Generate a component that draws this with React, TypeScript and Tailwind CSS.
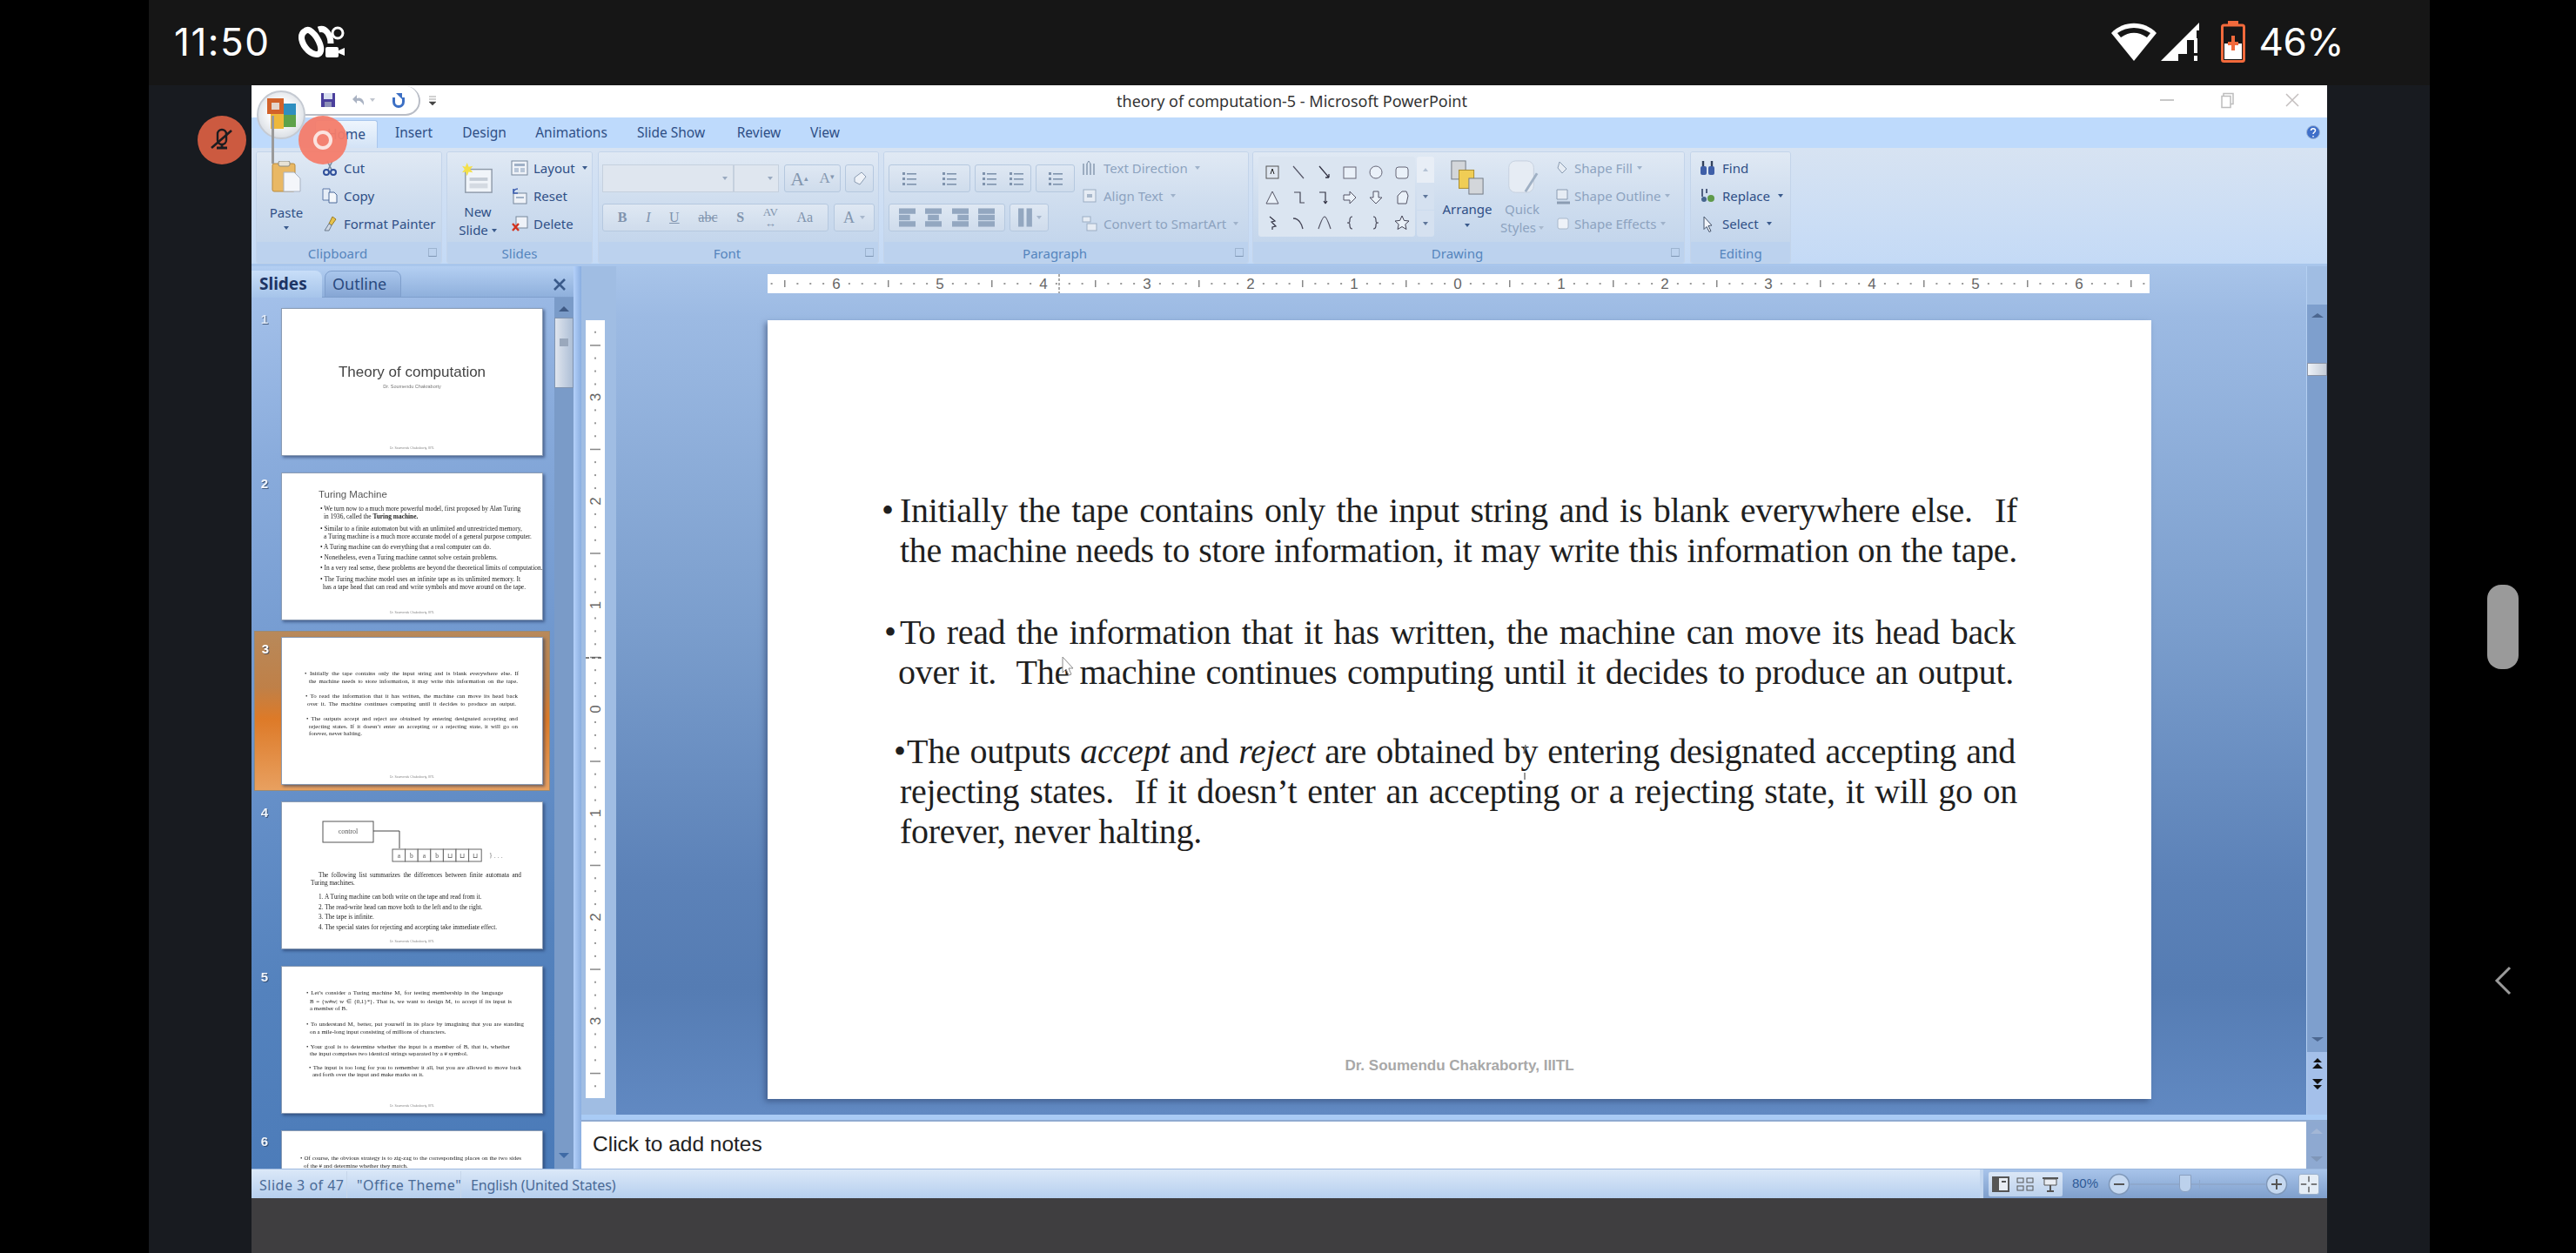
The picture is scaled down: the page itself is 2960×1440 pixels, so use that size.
import type { ReactNode } from 'react'

const serif = "font-['Liberation_Serif',serif]"

function Ic({ children, className = 'w-5 h-5' }: { children: ReactNode; className?: string }) {
  return (
    <svg viewBox="0 0 20 20" className={`${className} shrink-0`} fill="none">
      {children}
    </svg>
  )
}

function Arrow({ className = 'text-[#4a6a96]' }: { className?: string }) {
  return (
    <svg viewBox="0 0 6 4" className={`w-[6px] h-[4px] shrink-0 ${className}`}>
      <path d="M0 0h6L3 4z" fill="currentColor" />
    </svg>
  )
}

function Group({ label, className, launcher, children }: { label: string; className: string; launcher?: boolean; children: ReactNode }) {
  return (
    <div className={`${className} flex flex-col rounded-[3px] border border-[#c3d4ea] overflow-hidden`}>
      <div className="h-[104px] flex bg-gradient-to-b from-[#e0e9f4] via-[#d0deef] to-[#c4d6ec]">{children}</div>
      <div className={`h-[24px] pt-[2px] relative flex items-center justify-center bg-[#bcd2ee] text-[15px] text-[#5585bd] ${launcher ? 'pr-[26px]' : ''}`}>
        {label}
        {launcher && <span className="absolute right-[5px] top-[7px] w-[10px] h-[10px] border border-[#9db4d0] border-b-[#7f97b5]" />}
      </div>
    </div>
  )
}

function SmallBtn({ icon, label, disabled, arrow, w = 'gap-[6px]' }: { icon: ReactNode; label: string; disabled?: boolean; arrow?: boolean; w?: string }) {
  return (
    <div className={`h-[32px] flex items-center whitespace-nowrap text-[15px] ${w} ${disabled ? 'text-[#8da3bf]' : 'text-[#2f4f86]'}`}>
      {icon}
      <span>{label}</span>
      {arrow && <Arrow className={disabled ? 'text-[#9fb2ca] ml-[2px]' : 'text-[#3a5a8c] ml-[2px]'} />}
    </div>
  )
}

function Box({ className, children }: { className: string; children?: ReactNode }) {
  return (
    <div className={`${className} flex items-center border border-[#b5c8df] rounded-[3px] bg-gradient-to-b from-[#dfe8f3] to-[#cfdcec] text-[#7f93ad]`}>
      {children}
    </div>
  )
}

function Bars({ rows = 3 }: { rows?: number }) {
  return (
    <svg viewBox="0 0 20 20" className="w-[20px] h-[20px]">
      {Array.from({ length: rows }).map((_, i) => (
        <g key={i}>
          <rect x="2" y={3 + i * 6} width="3" height="3" fill="#7f93ad" />
          <rect x="7" y={4 + i * 6} width="11" height="1.6" fill="#7f93ad" />
        </g>
      ))}
    </svg>
  )
}

function AlignIcon({ kind }: { kind: number }) {
  const xs = [
    [0, 18, 0, 12, 0, 18],
    [0, 18, 3, 12, 0, 18],
    [0, 18, 6, 12, 0, 18],
    [0, 18, 0, 18, 0, 18],
  ][kind]
  return (
    <svg viewBox="0 0 18 22" className="w-[19px] h-[26px]">
      {[0, 1, 2].map((i) => (
        <rect key={i} x={xs[i * 2]} y={1 + i * 7} width={xs[i * 2 + 1]} height="6" fill="#93a7c0" />
      ))}
    </svg>
  )
}

// the 18 little shapes of the drawing gallery
const shapes: ReactNode[] = [
  <g key="0"><rect x="3" y="3" width="14" height="14" fill="#dfe7f1" stroke="#555" /><path d="M8 12l2-6 2 6" stroke="#222" /></g>,
  <path key="1" d="M4 3l12 14" stroke="#556" strokeWidth="1.2" />,
  <path key="2" d="M4 3l11 13m0 0v-4m0 4h-4" stroke="#334" strokeWidth="1.3" />,
  <rect key="3" x="3" y="4" width="14" height="13" fill="#eaf1f9" stroke="#667" />,
  <circle key="4" cx="10" cy="10" r="7" fill="#eaf1f9" stroke="#667" />,
  <rect key="5" x="3" y="4" width="14" height="13" rx="3" fill="#eaf1f9" stroke="#667" />,
  <path key="6" d="M10 3l7 14H3z" fill="#eaf1f9" stroke="#556" />,
  <path key="7" d="M5 4h7v12h5" stroke="#445" strokeWidth="1.2" />,
  <path key="8" d="M4 4h7v13m0 0l-2-3m2 3l2-3" stroke="#334" strokeWidth="1.2" />,
  <path key="9" d="M3 7h7V3l7 7-7 7v-4H3z" fill="#eaf1f9" stroke="#556" />,
  <path key="10" d="M7 3h6v7h4l-7 7-7-7h4z" fill="#eaf1f9" stroke="#556" />,
  <path key="11" d="M5 17V8l5-5h5l2 5-2 9z" fill="#eaf1f9" stroke="#556" />,
  <path key="12" d="M7 3l6 5-4 1 5 5-4 1v3" stroke="#334" strokeWidth="1.2" />,
  <path key="13" d="M4 5c6 0 9 4 11 12" stroke="#445" strokeWidth="1.3" />,
  <path key="14" d="M3 17C6 8 8 3 10 3s5 8 7 14" stroke="#556" strokeWidth="1.2" />,
  <path key="15" d="M13 3c-3 0-3 2-3 4s0 3-3 3c3 0 3 1 3 3s0 4 3 4" stroke="#445" strokeWidth="1.2" />,
  <path key="16" d="M7 3c3 0 3 2 3 4s0 3 3 3c-3 0-3 1-3 3s0 4-3 4" stroke="#445" strokeWidth="1.2" />,
  <path key="17" d="M10 2l2.4 5.4 5.6.6-4.2 3.8 1.2 5.7-5-3-5 3 1.200-5.700L2 8l5.600-.6z" fill="#eaf1f9" stroke="#445" />,
]

function Ribbon() {
  return (
    <div className="h-[136px] pl-[5px] pt-[4px] flex bg-gradient-to-b from-[#d7e3f2] to-[#c4daf6] border-b-[3px] border-[#a9c6ec]">
      <Group label="Clipboard" launcher className="w-[214px]">
        <div className="w-[68px] flex flex-col items-center pt-[10px] text-[15px] text-[#2f4f86]">
          <svg viewBox="0 0 34 36" className="w-[34px] h-[36px]">
            <rect x="1" y="3" width="26" height="32" rx="2" fill="#e9b864" stroke="#b98a3c" />
            <rect x="8" y="0" width="13" height="6" rx="2" fill="#e7e2d5" stroke="#8a8a80" />
            <path d="M14 13h12l7 7v15H14z" fill="#f4f6fa" stroke="#a8b2c2" />
          </svg>
          <span className="mt-[13px] leading-[20px]">Paste</span>
          <Arrow className="text-[#3a5a8c] mt-[6px]" />
        </div>
        <div className="pl-[6px] pt-[2px] flex flex-col">
          <SmallBtn label="Cut" icon={<Ic><path d="M7 2l5 10M13 2L8 12" stroke="#7a8aa0" strokeWidth="1.6" /><circle cx="6" cy="15" r="3" stroke="#2f4f9a" strokeWidth="2" /><circle cx="14" cy="15" r="3" stroke="#2f4f9a" strokeWidth="2" /></Ic>} />
          <SmallBtn label="Copy" icon={<Ic><path d="M2 2h8v13H2z" fill="#e6edf7" stroke="#5c79a8" /><path d="M9 6h6l3 3v9H9z" fill="#f4f7fb" stroke="#4c6a9a" /></Ic>} />
          <SmallBtn label="Format Painter" icon={<Ic><path d="M13 2l4 3-5 7-3-2z" fill="#e7c24a" stroke="#9a7a20" /><path d="M9 10l3 2-3 6-5 0z" fill="#cfd8e4" stroke="#6a7a8c" /></Ic>} />
        </div>
      </Group>

      <Group label="Slides" className="w-[168px] ml-[5px]">
        <div className="w-[70px] flex flex-col items-center pt-[12px] text-[15px] text-[#2f4f86] leading-[21px]">
          <svg viewBox="0 0 38 38" className="w-[36px] h-[36px]">
            <rect x="4" y="8" width="32" height="28" fill="#f0f4f9" stroke="#8d99a8" strokeWidth="1.500" />
            <rect x="9" y="18" width="22" height="4" fill="#c4ccd6" />
            <rect x="9" y="25" width="22" height="6" fill="#d4dae2" />
            <path d="M6 0l2 5 5-1-3 4 3 4-5-1-2 5-2-5-4 1 3-4-3-4 4 1z" fill="#f4e04a" />
          </svg>
          <span className="mt-[10px]">New</span>
          <span className="flex items-center gap-[4px]">Slide <Arrow className="text-[#3a5a8c]" /></span>
        </div>
        <div className="pl-[3px] pt-[2px] flex flex-col">
          <SmallBtn label="Layout" arrow icon={<Ic><rect x="1" y="2" width="18" height="16" fill="#eef2f8" stroke="#77879c" /><rect x="4" y="5" width="12" height="3" fill="#9fb0c6" /><rect x="4" y="10" width="5" height="5" fill="#b8c6d8" /><rect x="11" y="10" width="5" height="5" fill="#b8c6d8" /></Ic>} />
          <SmallBtn label="Reset" icon={<Ic><rect x="3" y="7" width="15" height="12" fill="#eef2f8" stroke="#77879c" /><rect x="6" y="11" width="9" height="2" fill="#9fb0c6" /><path d="M3 7c0-3 2-5 5-5M3 2l0 5 5 0" stroke="#3e5fb0" strokeWidth="1.600" /></Ic>} />
          <SmallBtn label="Delete" icon={<Ic><rect x="6" y="2" width="13" height="13" fill="#eef2f8" stroke="#77879c" /><path d="M2 10l7 8M9 10l-7 8" stroke="#d2331f" strokeWidth="2.400" /></Ic>} />
        </div>
      </Group>

      <Group label="Font" launcher className="w-[323px] ml-[6px]">
        <div className="pl-[4px] pt-[14px] flex flex-col gap-[13px]">
          <div className="flex">
            <div className="w-[151px] h-[32px] flex items-center justify-end pr-[6px] bg-[#dfe6ef] border border-[#c5d0de]"><Arrow className="text-[#9aaac0]" /></div>
            <div className="w-[52px] h-[32px] flex items-center justify-end pr-[6px] bg-[#dfe6ef] border border-[#c5d0de]"><Arrow className="text-[#9aaac0]" /></div>
            <Box className="w-[65px] h-[32px] ml-[6px] justify-around font-['Liberation_Serif',serif] text-[#8497af]">
              <span className="text-[22px]">A<sup className="text-[9px]">▴</sup></span>
              <span className="text-[17px]">A<sup className="text-[9px]">▾</sup></span>
            </Box>
            <Box className="w-[33px] h-[32px] ml-[5px] justify-center">
              <Ic><path d="M4 9l8-6 5 5-7 9-6-3z" fill="#eef2f8" stroke="#8b9cb2" /></Ic>
            </Box>
          </div>
          <div className="flex">
            <Box className="w-[260px] h-[32px] justify-around px-[6px] text-[16px] font-['Liberation_Serif',serif] text-[#8093ad]">
              <b>B</b>
              <i>I</i>
              <u>U</u>
              <s>abc</s>
              <b>S</b>
              <span className="text-[13px] leading-[13px] text-center">AV<br />↔</span>
              <span>Aa</span>
            </Box>
            <Box className="w-[47px] h-[32px] ml-[6px] justify-center gap-[6px] font-['Liberation_Serif',serif] text-[18px] text-[#8497af]">
              A <Arrow className="text-[#a8b8cc]" />
            </Box>
          </div>
        </div>
      </Group>

      <Group label="Paragraph" launcher className="w-[420px] ml-[5px]">
        <div className="pl-[5px] pt-[14px] flex flex-col gap-[13px]">
          <div className="flex gap-[5px]">
            <Box className="w-[94px] h-[32px] justify-around">
              <Bars /><Bars />
            </Box>
            <Box className="w-[65px] h-[32px] justify-around">
              <Bars /><Bars />
            </Box>
            <Box className="w-[45px] h-[32px] justify-center">
              <Bars />
            </Box>
          </div>
          <div className="flex gap-[5px]">
            <Box className="w-[134px] h-[32px] justify-around px-[5px]">
              <AlignIcon kind={0} /><AlignIcon kind={1} /><AlignIcon kind={2} /><AlignIcon kind={3} />
            </Box>
            <Box className="w-[45px] h-[32px] justify-center gap-[3px]">
              <svg viewBox="0 0 18 22" className="w-[19px] h-[26px]"><rect x="1" y="1" width="6" height="20" fill="#93a7c0" /><rect x="10" y="1" width="6" height="20" fill="#93a7c0" /></svg>
              <Arrow className="text-[#a8b8cc]" />
            </Box>
          </div>
        </div>
        <div className="pl-[7px] pt-[2px] flex flex-col">
          <SmallBtn disabled arrow label="Text Direction" icon={<Ic><path d="M3 18V5M7 18V5M11 18V5M15 18V5" stroke="#8294ab" strokeWidth="1.400" /><path d="M7 5l2-3 2 3" stroke="#8294ab" /></Ic>} />
          <SmallBtn disabled arrow label="Align Text" icon={<Ic><rect x="3" y="3" width="14" height="14" fill="#e6ecf4" stroke="#9badc3" /><rect x="7" y="8" width="6" height="4" fill="#a9b8cb" /></Ic>} />
          <SmallBtn disabled arrow label="Convert to SmartArt" icon={<Ic><rect x="2" y="2" width="9" height="6" fill="#e6ecf4" stroke="#9badc3" /><rect x="7" y="10" width="11" height="8" fill="#e6ecf4" stroke="#9badc3" /></Ic>} />
        </div>
      </Group>

      <Group label="Drawing" launcher className="w-[497px] ml-[4px]">
        <div className="ml-[6px] mt-[5px] w-[180px] h-[92px] pt-[3px] pl-[1px] grid grid-cols-6 content-start bg-[#dbe5f1] rounded-[3px]">
          {shapes.map((s, i) => (
            <div key={i} className="h-[29px] flex items-center justify-center">
              <Ic>{s}</Ic>
            </div>
          ))}
        </div>
        <div className="mt-[5px] ml-[2px] w-[20px] h-[92px] flex flex-col gap-[1px]">
          <div className="h-[30px] flex items-center justify-center bg-[#e8eef6] rounded-t-[3px]"><Arrow className="rotate-180 text-[#b4c2d4]" /></div>
          <div className="h-[30px] flex items-center justify-center bg-[#d5e1f0]"><Arrow className="text-[#5e769a]" /></div>
          <div className="h-[30px] flex items-center justify-center bg-[#d5e1f0] rounded-b-[3px]"><Arrow className="text-[#5e769a]" /></div>
        </div>
        <div className="w-[76px] flex flex-col items-center pt-[9px] text-[15px] text-[#2f4f86] leading-[21px]">
          <svg viewBox="0 0 40 42" className="w-[40px] h-[40px]">
            <rect x="1" y="1" width="17" height="22" fill="#d3d6da" stroke="#6f7780" />
            <rect x="10" y="12" width="18" height="22" fill="#f0cd55" stroke="#a88a2a" />
            <rect x="22" y="22" width="17" height="19" fill="#d3d6da" stroke="#6f7780" />
          </svg>
          <span className="mt-[6px]">Arrange</span>
          <Arrow className="text-[#3a5a8c] mt-[6px]" />
        </div>
        <div className="w-[50px] flex flex-col items-center pt-[9px] text-[15px] text-[#8da3bf] leading-[21px]">
          <svg viewBox="0 0 40 42" className="w-[40px] h-[40px]">
            <rect x="4" y="1" width="30" height="38" rx="8" fill="#e6ecf4" stroke="#c5d0de" />
            <path d="M38 16L24 38" stroke="#9fb0c4" strokeWidth="3" />
          </svg>
          <span className="mt-[6px]">Quick</span>
          <span className="flex items-center gap-[3px]">Styles <Arrow className="text-[#a8b8cc]" /></span>
        </div>
        <div className="pl-[12px] pt-[2px] flex flex-col">
          <SmallBtn disabled arrow w="gap-[3px]" label="Shape Fill" icon={<Ic><path d="M6 3l8 8-5 5-5-6z" fill="#e6ecf4" stroke="#8b9cb2" /></Ic>} />
          <SmallBtn disabled arrow w="gap-[3px]" label="Shape Outline" icon={<Ic><path d="M3 3h12v11H3z" fill="#e6ecf4" stroke="#8b9cb2" /><path d="M3 18h15" stroke="#8b9cb2" strokeWidth="3" /></Ic>} />
          <SmallBtn disabled arrow w="gap-[3px]" label="Shape Effects" icon={<Ic><rect x="4" y="4" width="12" height="12" rx="2" fill="#eef2f8" stroke="#a9b8cb" /></Ic>} />
        </div>
      </Group>

      <Group label="Editing" className="w-[116px] ml-[6px]">
        <div className="pl-[9px] pt-[2px] flex flex-col">
          <SmallBtn w="gap-[7px]" label="Find" icon={<Ic><rect x="2" y="8" width="7" height="10" rx="2" fill="#3f5fa8" /><rect x="11" y="8" width="7" height="10" rx="2" fill="#3f5fa8" /><path d="M5 2v6M15 2v6" stroke="#33415c" strokeWidth="2.400" /></Ic>} />
          <SmallBtn w="gap-[7px]" arrow label="Replace" icon={<Ic><path d="M4 2v9M9 2v5" stroke="#506080" strokeWidth="2" /><circle cx="6" cy="14" r="3" fill="#45658f" /><circle cx="14" cy="13" r="4" fill="#5f9a4a" /></Ic>} />
          <SmallBtn w="gap-[7px]" arrow label="Select" icon={<Ic><path d="M6 2l9 10-4 .5 3 6-2 1-3-6-3 3z" fill="#f2f5fa" stroke="#43526a" /></Ic>} />
        </div>
      </Group>
    </div>
  )
}

function HRuler() {
  const zero = 793
  const step = 14.875
  const marks = Array.from({ length: 107 }, (_, i) => i - 53)
  return (
    <svg viewBox="0 0 1588 22" className="w-[1588px] h-[22px] bg-white block">
      {marks.map((m) => {
        const x = zero + m * step
        if (m % 8 === 0) {
          return (
            <text key={m} x={x} y="17" textAnchor="middle" fontSize="17" fill="#666" fontFamily="Liberation Sans, sans-serif">
              {Math.abs(m / 8)}
            </text>
          )
        }
        return m % 4 === 0 ? <rect key={m} x={x - 0.5} y="7" width="1.500" height="8" fill="#888" /> : <rect key={m} x={x - 1} y="10" width="2" height="2" fill="#999" />
      })}
      <path d="M335 0v22" stroke="#555" strokeDasharray="3 2" />
    </svg>
  )
}

function VRuler() {
  const zero = 447
  const step = 14.94
  const marks = Array.from({ length: 61 }, (_, i) => i - 30)
  return (
    <svg viewBox="0 0 22 894" className="w-[22px] h-[894px] bg-white block">
      {marks.map((m) => {
        const y = zero + m * step
        if (m % 8 === 0) {
          return (
            <text key={m} x="11" y={y} transform={`rotate(-90 11 ${y})`} dy="6" textAnchor="middle" fontSize="17" fill="#666" fontFamily="Liberation Sans, sans-serif">
              {Math.abs(m / 8)}
            </text>
          )
        }
        return m % 4 === 0 ? <rect key={m} x="5" y={y - 0.5} width="12" height="1.500" fill="#888" /> : <rect key={m} x="10" y={y - 1} width="2" height="2" fill="#999" />
      })}
      <path d="M0 388h18" stroke="#555" strokeWidth="1.500" strokeDasharray="4 3" />
    </svg>
  )
}

function MainSlide() {
  const line = `w-[1284px] ml-[152px] whitespace-nowrap [text-align-last:justify]`
  return (
    <div className={`relative w-[1590px] h-[895px] bg-white pt-[196px] shadow-[-3px_3px_6px_rgba(40,60,100,0.5)] text-[40px] leading-[46px] text-[#1f1f1f] tracking-[-0.3px] ${serif}`}>
      <div className="flex ml-[131px] w-[1305px] whitespace-nowrap">
        <span className="w-[21px]">•</span>
        <span className="flex-1 [text-align-last:justify]">Initially the tape contains only the input string and is blank everywhere else.&nbsp; If</span>
      </div>
      <div className={line}>the machine needs to store information, it may write this information on the tape.</div>

      <div className="flex ml-[134px] w-[1300px] whitespace-nowrap mt-[48px]">
        <span className="w-[18px]">•</span>
        <span className="flex-1 [text-align-last:justify]">To read the information that it has written, the machine can move its head back</span>
      </div>
      <div className="w-[1282px] ml-[150px] whitespace-nowrap [text-align-last:justify]">over it.&nbsp; The machine continues computing until it decides to produce an output.</div>

      <div className="flex ml-[145px] w-[1289px] whitespace-nowrap mt-[45px]">
        <span className="w-[15px]">•</span>
        <span className="flex-1 [text-align-last:justify]">
          The outputs <i>accept</i> and <i>reject</i> are obtained by entering designated accepting and
        </span>
      </div>
      <div className={line}>rejecting states.&nbsp; If it doesn’t enter an accepting or a rejecting state, it will go on</div>
      <div className="ml-[152px]">forever, never halting.</div>

      <div className="absolute bottom-[27px] inset-x-0 text-center font-['Liberation_Sans',sans-serif] font-bold text-[17px] leading-[22px] tracking-normal text-[#a8a8a8]">
        Dr. Soumendu Chakraborty, IIITL
      </div>

      {/* mouse pointer left on the slide */}
      <svg viewBox="0 0 14 24" className="absolute left-[338px] top-[386px] w-[14px] h-[24px]">
        <path d="M1 1v18l4-4 3 7 3-1-3-7h5z" fill="#fff" stroke="#8a8a8a" />
      </svg>
      <svg viewBox="0 0 12 46" className="absolute left-[864px] top-[486px] w-[12px] h-[46px]">
        <path d="M7 2L5 12M6 34v8" stroke="#777" strokeWidth="1.500" />
      </svg>
    </div>
  )
}

function Thumb({ children, noFoot }: { children: ReactNode; noFoot?: boolean }) {
  return (
    <div className={`relative w-[301px] h-[170px] bg-white border border-[#8b9cb4] shadow-[2px_2px_3px_rgba(30,50,90,0.55)] overflow-hidden text-[#222] blur-[0.3px] ${serif}`}>
      {children}
      {!noFoot && <div className="absolute bottom-[6px] inset-x-0 text-center text-[3.500px] leading-[4px] text-[#888] font-['Liberation_Sans',sans-serif]">Dr. Soumendu Chakraborty, IIITL</div>}
    </div>
  )
}

function Tl({ className, children }: { className: string; children: ReactNode }) {
  return <div className={`${className} whitespace-nowrap [text-align-last:justify]`}>{children}</div>
}

const thumbs: ReactNode[] = [
  <div key="1" className="pt-[63px] text-center font-['Liberation_Sans',sans-serif]">
    <div className="text-[17px] leading-[20px] text-[#444]">Theory of computation</div>
    <div className="text-[5.500px] leading-[8px] text-[#777] mt-[2px]">Dr. Soumendu Chakraborty</div>
  </div>,
  <div key="2" className="pt-[16px] pl-[42px] text-[7.400px] leading-[8.500px]">
    <div className="font-['Liberation_Sans',sans-serif] text-[11.500px] leading-[16px] text-[#555]">Turing Machine</div>
    <Tl className="w-[227px] ml-[2px] mt-[5px]">• We turn now to a much more powerful model, first proposed by Alan Turing</Tl>
    <div className="ml-[6px]">in 1936, called the <b>Turing machine.</b></div>
    <Tl className="w-[220px] ml-[2px] mt-[6px]">• Similar to a finite automaton but with an unlimited and unrestricted memory,</Tl>
    <Tl className="w-[222px] ml-[6px]">a Turing machine is a much more accurate model of a general purpose computer.</Tl>
    <Tl className="w-[182px] ml-[2px] mt-[4px]">• A Turing machine can do everything that a real computer can do.</Tl>
    <Tl className="w-[188px] ml-[2px] mt-[3px]">• Nonetheless, even a Turing machine cannot solve certain problems.</Tl>
    <Tl className="w-[240px] ml-[2px] mt-[4px]">• In a very real sense, these problems are beyond the theoretical limits of computation.</Tl>
    <Tl className="w-[230px] ml-[2px] mt-[4px]">• The Turing machine model uses an infinite tape as its unlimited memory. It</Tl>
    <Tl className="w-[233px] ml-[5px] mt-[1px]">has a tape head that can read and write symbols and move around on the tape.</Tl>
  </div>,
  <div key="3" className="pt-[37px] pl-[26px] text-[6.900px] leading-[8.700px]">
    <Tl className="w-[246px]">• Initially the tape contains only the input string and is blank everywhere else. If</Tl>
    <Tl className="w-[240px] ml-[5px]">the machine needs to store information, it may write this information on the tape.</Tl>
    <Tl className="w-[244px] ml-[1px] mt-[9px]">• To read the information that it has written, the machine can move its head back</Tl>
    <Tl className="w-[240px] ml-[3px]">over it. The machine continues computing until it decides to produce an output.</Tl>
    <Tl className="w-[243px] ml-[2px] mt-[8px]">• The outputs accept and reject are obtained by entering designated accepting and</Tl>
    <Tl className="w-[240px] ml-[5px]">rejecting states. If it doesn’t enter an accepting or a rejecting state, it will go on</Tl>
    <div className="ml-[5px]">forever, never halting.</div>
  </div>,
  <div key="4" className="relative text-[7.300px] leading-[8.500px]">
    <svg viewBox="0 0 301 72" className="w-[301px] h-[72px] block">
      <rect x="47" y="22" width="58" height="24" fill="#fff" stroke="#555" />
      <text x="76" y="36" textAnchor="middle" fontSize="8" fill="#555" fontFamily="Liberation Serif, serif">control</text>
      <path d="M105 33h30v20" stroke="#444" fill="none" />
      {['a', 'b', 'a', 'b', '⊔', '⊔', '⊔'].map((c, i) => (
        <g key={i}>
          <rect x={127 + i * 14.6} y="54" width="14.6" height="14" fill="#fff" stroke="#666" />
          <text x={134.300 + i * 14.6} y="64" textAnchor="middle" fontSize="7.500" fill="#555" fontFamily="Liberation Serif, serif">{c}</text>
        </g>
      ))}
      <text x="238" y="64" fontSize="8" fill="#777" fontFamily="Liberation Serif, serif">{'} . . .'}</text>
    </svg>
    <Tl className="w-[233px] ml-[42px] mt-[8px]">The following list summarizes the differences between finite automata and</Tl>
    <div className="ml-[33px]">Turing machines.</div>
    <div className="ml-[42px] mt-[8px]">1. A Turing machine can both write on the tape and read from it.</div>
    <div className="ml-[42px] mt-[3px]">2. The read-write head can move both to the left and to the right.</div>
    <div className="ml-[42px] mt-[3px]">3. The tape is infinite.</div>
    <div className="ml-[42px] mt-[3px]">4. The special states for rejecting and accepting take immediate effect.</div>
  </div>,
  <div key="5" className="pt-[26px] pl-[28px] text-[6.900px] leading-[8.500px]">
    <Tl className="w-[226px]">• Let’s consider a Turing machine M₁ for testing membership in the language</Tl>
    <Tl className="w-[232px] ml-[4px] mt-[1px]">B = {'{'}w#w| w ∈ {'{'}0,1{'}'}*{'}'}. That is, we want to design M₁ to accept if its input is</Tl>
    <div className="ml-[4px]">a member of B.</div>
    <Tl className="w-[250px] mt-[9px]">• To understand M₁ better, put yourself in its place by imagining that you are standing</Tl>
    <div className="ml-[4px] mt-[1px]">on a mile-long input consisting of millions of characters.</div>
    <Tl className="w-[234px] mt-[8px]">• Your goal is to determine whether the input is a member of B, that is, whether</Tl>
    <div className="ml-[4px]">the input comprises two identical strings separated by a # symbol.</div>
    <Tl className="w-[244px] ml-[3px] mt-[7px]">• The input is too long for you to remember it all, but you are allowed to move back</Tl>
    <div className="ml-[7px]">and forth over the input and make marks on it.</div>
  </div>,
  <div key="6" className="pt-[27px] pl-[21px] text-[6.900px] leading-[8.500px]">
    <Tl className="w-[254px]">• Of course, the obvious strategy is to zig-zag to the corresponding places on the two sides</Tl>
    <div className="ml-[4px]">of the # and determine whether they match.</div>
  </div>,
]

function SlidesPanel() {
  return (
    <div className="w-[370px] flex flex-col bg-[linear-gradient(168deg,#a8c4ec_0%,#8aacdc_20%,#6a93cb_50%,#5482bd_75%,#4a7ab8_100%)]">
      <div className="h-[36px] pt-[5px] flex items-start bg-gradient-to-b from-[#b4cff2] to-[#8fb0dc] border-b border-[#7f9fcc] relative">
        <div className="w-[81px] h-[31px] flex items-center pl-[9px] text-[19px] font-bold text-[#1d3464] bg-gradient-to-b from-[#c8def8] to-[#a6c4ea] rounded-tr-[8px]">Slides</div>
        <div className="w-[88px] h-[31px] ml-[3px] flex items-center pl-[8px] text-[18px] text-[#2a4a7e] bg-gradient-to-b from-[#a9c6ec] to-[#86a6d4] border border-[#7f9fcc] rounded-t-[8px]">Outline</div>
        <svg viewBox="0 0 14 14" className="absolute left-[347px] top-[14px] w-[14px] h-[14px]">
          <path d="M1 1l12 12M13 1L1 13" stroke="#3a5a8a" strokeWidth="2.600" />
        </svg>
      </div>
      <div className="flex-1 flex min-h-0">
        <div className="w-[348px] h-[1001px] overflow-hidden pt-[5px] pl-[3px] flex flex-col gap-[5px]">
          {thumbs.map((t, i) => (
            <div
              key={i}
              className={`shrink-0 w-[340px] h-[184px] flex items-center relative ${
                i === 2 ? 'border border-[#9c8a72] bg-[linear-gradient(180deg,#b8895a_0%,#bf8048_35%,#dd7a28_55%,#e8a060_100%)]' : ''
              }`}
            >
              <span className={`absolute left-[1px] top-[10px] w-[22px] text-center text-[15px] leading-[20px] font-bold ${i === 2 ? 'text-white' : i === 0 ? 'text-[#dfe9f6]' : 'text-[#f2f6fb]'} font-['Liberation_Sans',sans-serif] drop-shadow-[1px_1px_0_rgba(40,60,90,0.7)]`}>{i + 1}</span>
              <div className={i === 2 ? 'absolute left-[30px] top-[6px]' : 'ml-[31px]'}>
                <Thumb noFoot={i === 5}>{t}</Thumb>
              </div>
            </div>
          ))}
        </div>
        <div className="w-[22px] flex flex-col items-center bg-[#7a9bc8]">
          <svg viewBox="0 0 12 6" className="w-[12px] h-[6px] mt-[10px]"><path d="M0 6L6 0l6 6z" fill="#3f5a85" /></svg>
          <div className="w-[22px] h-[81px] mt-[7px] bg-gradient-to-r from-[#dfe5ee] to-[#aebfd6] border border-[#8094b0] flex items-center justify-center pb-[24px]">
            <span className="w-[10px] h-[9px] bg-[#9aa8bc]" />
          </div>
          <svg viewBox="0 0 12 6" className="w-[12px] h-[6px] mt-auto mb-[12px]"><path d="M0 0l6 6 6-6z" fill="#3f6aa5" /></svg>
        </div>
      </div>
    </div>
  )
}

function PrevNext({ down }: { down?: boolean }) {
  return (
    <svg viewBox="0 0 12 14" className={`w-[12px] h-[14px] ${down ? 'rotate-180' : ''}`}>
      <path d="M1 6l5-5 5 5zM0 13l6-6 6 6z" fill="#111" />
    </svg>
  )
}

function Workspace() {
  return (
    <div className="flex-1 flex flex-col min-w-0">
      <div className="h-[975px] flex">
        <div className="w-[40px] pt-[62px] pl-[5px] bg-[#a0bde3]">
          <VRuler />
        </div>
        <div className="w-[1942px] pl-[174px] pt-[9px] bg-[linear-gradient(180deg,#a8c4e9_0%,#9cbae3_6%,#7b9ecd_42%,#5c82b8_72%,#557cb3_85%,#6189c2_100%)]">
          <HRuler />
          <div className="mt-[31px]">
            <MainSlide />
          </div>
        </div>
        <div className="w-[24px] pt-[44px] flex flex-col bg-[#a0bde3] border-l border-[#b5d0f2]">
          <div className="h-[859px] flex flex-col items-center bg-[#7e9fcd]">
            <svg viewBox="0 0 14 5" className="w-[14px] h-[5px] mt-[10px]"><path d="M0 5l7-5 7 5z" fill="#4c6790" /></svg>
            <div className="w-[23px] h-[15px] mt-[52px] bg-gradient-to-r from-[#eef2f7] to-[#c4ccd8] border border-[#8a93a5]" />
            <svg viewBox="0 0 14 5" className="w-[14px] h-[5px] mt-auto mb-[12px]"><path d="M0 0l7 5 7-5z" fill="#4c6790" /></svg>
          </div>
          <div className="flex-1 flex flex-col items-center pt-[6px] gap-[10px] bg-[#a4c0ea]">
            <PrevNext />
            <PrevNext down />
          </div>
        </div>
      </div>
      <div className="h-[8px] bg-[#a9cbf5] border-b-[2px] border-[#8faad0]" />
      <div className="h-[54px] flex">
        <div className="w-[1982px] bg-white flex items-center pl-[13px] pb-[2px] text-[24.500px] text-[#222] font-['Liberation_Sans',sans-serif]">Click to add notes</div>
        <div className="w-[24px] flex flex-col items-center justify-between py-[8px] bg-[#8ea9d1]">
          <svg viewBox="0 0 14 6" className="w-[14px] h-[6px]"><path d="M0 6l7-6 7 6z" fill="#a3b7d6" /></svg>
          <svg viewBox="0 0 14 6" className="w-[14px] h-[6px]"><path d="M0 0l7 6 7-6z" fill="#7f96b8" /></svg>
        </div>
      </div>
    </div>
  )
}

function StatusBar() {
  return (
    <div className="h-[34px] flex border-t border-[#9cb8de] text-[16px] text-[#4a6a96] tracking-[0.5px]">
      <div className="w-[1986px] pt-[2px] flex items-center bg-gradient-to-b from-[#dbe8f8] to-[#b6cfee] font-['Noto_Sans',sans-serif]">
        <div className="w-[110px] pl-[9px] border-r border-[#c6d6ea] h-full flex items-center whitespace-nowrap">Slide 3 of 47</div>
        <div className="w-[131px] pl-[11px] border-r border-[#c6d6ea] h-full flex items-center whitespace-nowrap">"Office Theme"</div>
        <div className="pl-[11px] whitespace-nowrap tracking-[-0.1px]">English (United States)</div>
      </div>
      <div className="flex-1 flex items-center bg-gradient-to-b from-[#a8c4ea] to-[#7f9fcc] border-l-[4px] border-[#c2d6ef]">
        <div className="w-[85px] h-[28px] ml-[6px] flex items-center justify-around bg-gradient-to-b from-[#dbe7f6] to-[#bcd1ec] rounded-[2px]">
          <svg viewBox="0 0 20 18" className="w-[20px] h-[18px]"><rect x="1" y="1" width="18" height="16" fill="#e9edf3" stroke="#555" strokeWidth="2" /><rect x="2" y="2" width="6" height="14" fill="#555" /><rect x="11" y="5" width="5" height="2" fill="#555" /></svg>
          <svg viewBox="0 0 20 18" className="w-[20px] h-[18px]"><rect x="1" y="2" width="7" height="5" fill="none" stroke="#555" /><rect x="12" y="2" width="7" height="5" fill="none" stroke="#555" /><rect x="1" y="11" width="7" height="5" fill="none" stroke="#555" /><rect x="12" y="11" width="7" height="5" fill="none" stroke="#555" /></svg>
          <svg viewBox="0 0 20 18" className="w-[20px] h-[18px]"><path d="M1 1h18v2H1z" fill="#555" /><path d="M3 3h14v7H3z" fill="#e9edf3" stroke="#555" /><path d="M10 10v6M6 17h8" stroke="#555" strokeWidth="2" /></svg>
        </div>
        <span className="ml-[11px] w-[33px] text-[15px] tracking-normal text-[#2f5a96] font-['Liberation_Sans',sans-serif]">80%</span>
        <svg viewBox="0 0 26 26" className="ml-[8px] w-[26px] h-[26px]"><circle cx="13" cy="13" r="11.500" fill="#c5d8f0" stroke="#7f97b8" strokeWidth="1.500" /><path d="M7 13h12" stroke="#555" strokeWidth="2" /></svg>
        <div className="w-[155px] h-[2px] bg-[#8ea8cc] relative">
          <span className="absolute left-[56px] -top-[10px] w-[14px] h-[20px] bg-[#bcd1ec] border border-[#8aa0c0] rounded-b-[6px]" />
          <span className="absolute left-[79px] -top-[4px] w-[1px] h-[10px] bg-[#8ea8cc]" />
        </div>
        <svg viewBox="0 0 26 26" className="w-[26px] h-[26px]"><circle cx="13" cy="13" r="11.500" fill="#c5d8f0" stroke="#7f97b8" strokeWidth="1.500" /><path d="M7 13h12M13 7v12" stroke="#555" strokeWidth="2" /></svg>
        <svg viewBox="0 0 24 24" className="ml-[12px] w-[24px] h-[24px] bg-[#e5edf6] rounded-[3px] border border-[#9ab0cc]"><path d="M2 12h7M15 12h7M12 2v7M12 15v7" stroke="#555" strokeWidth="1.500" /></svg>
      </div>
    </div>
  )
}

function TitleBar() {
  return (
    <div className="h-[37px] bg-white relative flex items-center justify-center pl-[6px] text-[18px] text-[#333]">
      <span>theory of computation-5 - Microsoft PowerPoint</span>
      <div className="absolute left-[61px] top-[1px] w-[133px] h-[34px] border-[2px] border-l-0 border-t-0 border-[#b9bdc6] rounded-r-[17px] flex items-center">
        <svg viewBox="0 0 16 16" className="ml-[19px] w-[16px] h-[18px]"><rect x="0" y="0" width="16" height="16" fill="#4a3f9c" /><rect x="3" y="0" width="10" height="7" fill="#d8dff0" /><rect x="4" y="10" width="8" height="6" fill="#8d90b8" /></svg>
        <svg viewBox="0 0 16 16" className="ml-[19px] w-[16px] h-[18px]"><path d="M14 14c1-6-3-10-8-8V2L1 7l5 5V9c3-1 6 1 8 5z" fill="#a9b2c2" /></svg>
        <Arrow className="ml-[5px] text-[#c0c5ce]" />
        <svg viewBox="0 0 16 18" className="ml-[19px] w-[16px] h-[18px]"><path d="M2.500 6v5a5.500 5.500 0 0 0 11 0V6" stroke="#3c6fc4" strokeWidth="3" fill="none" /><path d="M5 1h7v7z" fill="#3c6fc4" /></svg>
      </div>
      <svg viewBox="0 0 8 12" className="absolute left-[204px] top-[12px] w-[8px] h-[12px]"><path d="M0 1h8M0 4h8M0 7h8l-4 4z" fill="#444" stroke="#444" strokeWidth="0.500" /></svg>
      <span className="absolute left-[2193px] top-[16px] w-[16px] h-[2px] bg-[#c8c8c8]" />
      <svg viewBox="0 0 16 18" className="absolute left-[2263px] top-[8px] w-[16px] h-[19px]"><path d="M1 4h10v13H1zM3 4V1h11v12h-3" fill="none" stroke="#bdbdbd" strokeWidth="1.500" /></svg>
      <svg viewBox="0 0 16 16" className="absolute left-[2337px] top-[9px] w-[16px] h-[16px]"><path d="M1 1l14 14M15 1L1 15" stroke="#c4bfbf" strokeWidth="1.500" /></svg>
    </div>
  )
}

function TabRow() {
  const tab = 'flex items-center justify-center h-[35px]'
  return (
    <div className="h-[35px] flex bg-[#bedafc] text-[15.500px] text-[#2f4f86] pl-[73px] relative">
      <div className="w-[72px] h-[32px] mt-[3px] flex items-center justify-center rounded-t-[3px] border border-b-0 border-[#a9c6ec] bg-gradient-to-b from-[#eef5fd] to-[#d3e3f6]">Home</div>
      <div className={`${tab} w-[83px]`}>Insert</div>
      <div className={`${tab} w-[79px]`}>Design</div>
      <div className={`${tab} w-[121px]`}>Animations</div>
      <div className={`${tab} w-[108px]`}>Slide Show</div>
      <div className={`${tab} w-[94px]`}>Review</div>
      <div className={`${tab} w-[58px]`}>View</div>
      <svg viewBox="0 0 16 16" className="absolute right-[8px] top-[9px] w-[16px] h-[16px]">
        <circle cx="8" cy="8" r="7.500" fill="#3f6fc9" stroke="#9db4d4" />
        <path d="M5.500 6c0-3 5-3 5 0 0 2-2.500 2-2.500 4M8 12v1.500" stroke="#fff" strokeWidth="1.500" fill="none" />
      </svg>
    </div>
  )
}

function Overlays() {
  return (
    <>
      <div className="absolute left-[227px] top-[133px] w-[56px] h-[56px] rounded-full bg-[#cc5a40] flex items-center justify-center">
        <svg viewBox="0 0 30 30" className="w-[30px] h-[30px]">
          <rect x="10" y="3" width="10" height="17" rx="5" fill="none" stroke="#1c1c20" strokeWidth="2.400" />
          <path d="M9 24h12M15 20v4" stroke="#1c1c20" strokeWidth="2.800" />
          <path d="M3 24L26 4" stroke="#1c1c20" strokeWidth="2.600" />
        </svg>
      </div>
      <div className="absolute left-[295px] top-[104px] w-[56px] h-[56px] rounded-full bg-[radial-gradient(circle_at_50%_45%,#ffffff_30%,#dfe3e8_70%,#c4c9d0_100%)] border-[2px] border-[#c5cad2] flex items-center justify-center">
        <svg viewBox="0 0 36 40" className="w-[36px] h-[40px]">
          <rect x="2" y="1" width="19" height="18" fill="#d2622a" />
          <rect x="7" y="6" width="9" height="8" fill="#e4d6cc" />
          <rect x="21" y="7" width="14" height="13" fill="#2f8fc0" />
          <rect x="6" y="19" width="15" height="17" fill="#eeb83a" />
          <rect x="21" y="20" width="14" height="14" fill="#5ea24a" />
        </svg>
      </div>
      <span className="absolute left-[312px] top-[133px] w-[3px] h-[55px] bg-[#9a9a9a]" />
      <div className="absolute left-[343px] top-[133px] w-[56px] h-[56px] rounded-full bg-[#f47c6a]/95 flex items-center justify-center">
        <span className="w-[22px] h-[22px] rounded-full border-[4px] border-[#fbe3df]" />
      </div>
    </>
  )
}

function PhoneStatus() {
  const txt = "font-['Inter',sans-serif] text-[44px] leading-none text-white"
  return (
    <div className="h-[98px] bg-[#161616] flex items-center pb-[2px]">
      <span className={`${txt} ml-[29px] tracking-[1.5px]`}>11:50</span>
      <svg viewBox="0 0 54 40" className="ml-[32px] w-[54px] h-[40px]">
        <path d="M8 8c-6 4-4 14 4 22 6 5 12 6 14 2 3-6-4-20-12-25-2-1-4-1-6 1z" fill="none" stroke="#fff" strokeWidth="7" />
        <path d="M24 6c8-3 14 6 14 16" fill="none" stroke="#fff" strokeWidth="7" />
        <circle cx="46" cy="10" r="6" fill="none" stroke="#fff" strokeWidth="3" />
        <rect x="32" y="26" width="15" height="12" rx="2" fill="#fff" />
        <path d="M47 30l7-3v9l-7-3z" fill="#fff" />
      </svg>
      <svg viewBox="0 0 52 44" className="ml-auto w-[52px] h-[44px]">
        <path d="M26 44L0 12C14-3 38-3 52 12z" fill="#fff" />
        <path d="M7 12c11-8 27-8 38 0l-4 5C31 10 21 10 11 17z" fill="#161616" />
      </svg>
      <svg viewBox="0 0 44 44" className="ml-[5px] w-[44px] h-[44px]">
        <path d="M44 0v9h-3V22h-8V44H0z" fill="#fff" />
        <path d="M30 20v16H20v8h18V20z" fill="#161616" />
        <rect x="38" y="18" width="4" height="17" fill="#fff" />
        <rect x="38" y="38" width="4" height="6" fill="#fff" />
      </svg>
      <svg viewBox="0 0 28 48" className="ml-[25px] w-[28px] h-[48px]">
        <rect x="8" y="0" width="12" height="6" fill="#f26a3c" />
        <rect x="1.500" y="5" width="25" height="41.500" rx="2" fill="#161616" stroke="#f26a3c" strokeWidth="3" />
        <rect x="4" y="26" width="20" height="18" fill="#fff" />
        <path d="M14 17v17M8 26h12" stroke="#f26a3c" strokeWidth="4" />
      </svg>
      <span className={`${txt} ml-[16px] mr-[99px] tracking-[-0.5px]`}>46%</span>
    </div>
  )
}

export default function App() {
  return (
    <div className="relative w-[2960px] h-[1440px] overflow-hidden flex bg-black font-['Noto_Sans','Liberation_Sans',sans-serif]">
      <div className="w-[171px] bg-black" />
      <div className="w-[2621px] flex flex-col">
        <PhoneStatus />
        <div className="flex-1 flex bg-[#181b20]">
          <div className="w-[118px]" />
          <div className="w-[2385px] flex flex-col bg-[#3f3e40]">
            <TitleBar />
            <TabRow />
            <Ribbon />
            <div className="h-[1037px] flex">
              <SlidesPanel />
              <div className="w-[9px] bg-gradient-to-r from-[#b5d1fa] to-[#8aaee0]" />
              <Workspace />
            </div>
            <StatusBar />
          </div>
        </div>
      </div>
      <div className="flex-1 flex flex-col items-center bg-black">
        <div className="mt-[672px] w-[36px] h-[97px] bg-[#9a9a9a] rounded-[16px]" />
        <svg viewBox="0 0 20 34" className="mt-[341px] w-[20px] h-[34px]">
          <path d="M18 2L3 17l15 15" fill="none" stroke="#9a9a9a" strokeWidth="3" />
        </svg>
      </div>
      <Overlays />
    </div>
  )
}
